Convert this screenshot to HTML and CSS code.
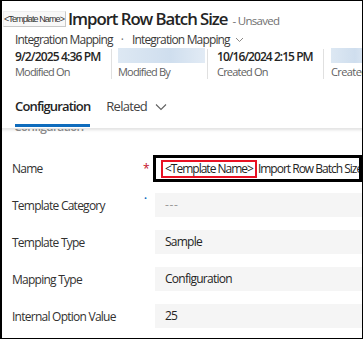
FILE: index.html
```html
<!DOCTYPE html>
<html>
<head>
<meta charset="utf-8">
<link rel="stylesheet" href="styles.css">
</head>
<body>
<div class="frame">
  <header class="head">
    <div class="title-row">
      <span class="tag">&lt;Template Name&gt;</span>
      <h1 class="title">Import Row Batch Size</h1>
      <span class="unsaved">- Unsaved</span>
    </div>
    <div class="crumbs">
      <span>Integration Mapping</span>
      <span class="dot">·</span>
      <span>Integration Mapping</span>
      <svg class="chev-sm" width="9" height="6" viewBox="0 0 9 6"><path d="M1 1l3.5 3.5L8 1" fill="none" stroke="#8a8886" stroke-width="1"/></svg>
    </div>
    <div class="facts">
      <div class="fact f1">
        <div class="val">9/2/2025 4:36 PM</div>
        <div class="lab">Modified On</div>
      </div>
      <div class="fact f2">
        <div class="blur"></div>
        <div class="lab">Modified By</div>
      </div>
      <div class="fact f3">
        <div class="val">10/16/2024 2:15 PM</div>
        <div class="lab">Created On</div>
      </div>
      <div class="fact f4">
        <div class="blur"></div>
        <div class="lab">Created By</div>
      </div>
    </div>
    <nav class="tabs">
      <span class="tab active">Configuration</span>
      <span class="tab">Related
        <svg class="chev" width="12" height="8" viewBox="0 0 12 8"><path d="M1 1.5l5 5 5-5" fill="none" stroke="#616161" stroke-width="1.1"/></svg>
      </span>
    </nav>
  </header>
  <main class="body">
    <div class="section-title">Configuration</div>
    <div class="form">
      <div class="row">
        <div class="label">Name</div>
        <div class="mark req">*</div>
        <div class="input focus"><span class="hl">&lt;Template Name&gt;</span>Import Row Batch Size</div>
      </div>
      <div class="row">
        <div class="label">Template Category</div>
        <div class="mark rec">•</div>
        <div class="input empty">---</div>
      </div>
      <div class="row">
        <div class="label">Template Type</div>
        <div class="mark"></div>
        <div class="input">Sample</div>
      </div>
      <div class="row">
        <div class="label">Mapping Type</div>
        <div class="mark"></div>
        <div class="input">Configuration</div>
      </div>
      <div class="row">
        <div class="label">Internal Option Value</div>
        <div class="mark"></div>
        <div class="input">25</div>
      </div>
    </div>
  </main>
</div>
</body>
</html>
```
FILE: styles.css
```css
* { box-sizing: border-box; }
html, body { margin: 0; padding: 0; background: #fff; }
body { font-family: "Open Sans", "Noto Sans", sans-serif; color: #242424; }

.frame {
  width: 363px;
  height: 339px;
  border: 1px solid #000;
  border-left-width: 2px;
  overflow: hidden;
  background: #fff;
  position: relative;
}

.title-row {
  display: flex;
  align-items: center;
  height: 30px;
  padding-top: 5px;
  padding-left: 1px;
  white-space: nowrap;
}
.tag {
  font-family: "Liberation Sans", sans-serif;
  font-size: 9px;
  letter-spacing: -0.9px;
  color: #333;
  border: 1px solid #c8c8c8;
  border-top-color: #eee;
  border-left-color: #eee;
  padding: 1px 1px 1px 0;
  line-height: 12px;
  background: #f8f8f8;
  margin-right: 2px;
}
.title {
  margin: 0;
  font-size: 16.8px;
  font-weight: 600;
  letter-spacing: -1.05px;
  color: #242424;
  line-height: 24px;
}
.unsaved {
  font-size: 11.5px;
  letter-spacing: -0.7px;
  color: #707070;
  margin-left: 5px;
  margin-top: 3px;
}

.crumbs {
  display: flex;
  align-items: center;
  padding-left: 13px;
  height: 16px;
  font-size: 12px;
  font-weight: 500;
  letter-spacing: -0.85px;
  color: #3b3a39;
  white-space: nowrap;
}
.crumbs .dot { margin: 0 9px 0 8px; color: #707070; font-weight: 400; }
.chev-sm { margin-left: 5px; margin-top: 2px; }

.facts {
  display: flex;
  height: 33px;
  margin-top: 1px;
  padding-left: 13px;
  white-space: nowrap;
}
.fact {
  display: flex;
  flex-direction: column;
  border-right: 1px solid #e0e0e0;
  height: 30px;
  margin-top: 1px;
  flex: none;
}
.f1 { width: 97px; }
.f2 { width: 96px; padding-left: 6px; }
.f3 { width: 116px; padding-left: 9px; }
.f4 { padding-left: 7px; border-right: none; }
.val {
  font-size: 12px;
  font-weight: 600;
  letter-spacing: -0.85px;
  line-height: 16px;
  color: #242424;
}
.f3 .val { letter-spacing: -0.95px; }
.lab {
  font-size: 11px;
  color: #616161;
  letter-spacing: -0.8px;
  line-height: 14px;
}
.f4 .lab { letter-spacing: -0.6px; }
.blur {
  height: 15px;
  margin-top: -1px;
  margin-bottom: 2px;
  width: 87px;
  background: linear-gradient(90deg, #dde8f3, #cfdeee 60%, #e2ebf5);
  filter: blur(0.6px);
}
.f4 .blur { width: 40px; }

.tabs {
  display: flex;
  align-items: flex-start;
  height: 47px;
  padding-left: 13px;
  padding-top: 15px;
  white-space: nowrap;
}
.tab {
  font-size: 13px;
  color: #424242;
  letter-spacing: -0.7px;
  line-height: 20px;
  display: flex;
  align-items: center;
}
.tab.active {
  font-weight: 600;
  color: #242424;
  letter-spacing: -0.85px;
  padding-bottom: 8px;
  border-bottom: 3px solid #0f6cbd;
  margin-right: 16px;
}
.chev { margin-left: 8px; margin-top: 1px; }

.body {
  position: relative;
  height: 212px;
  border-top: 1px solid #e6e6e6;
  box-shadow: inset 0 3px 3px -2px rgba(0,0,0,0.12);
  overflow: hidden;
}
.section-title {
  font-size: 12px;
  font-weight: 600;
  letter-spacing: -0.8px;
  color: #8a8a8a;
  padding-left: 12px;
  margin-top: -10px;
  height: 16px;
  line-height: 16px;
}

.form {
  display: flex;
  flex-direction: column;
  gap: 11px;
  margin-top: 20px;
}
.row {
  display: grid;
  grid-template-columns: 141px 10px 1fr;
  align-items: center;
  height: 26px;
}
.label {
  font-size: 12px;
  color: #323130;
  letter-spacing: -0.75px;
  padding-left: 10px;
  white-space: nowrap;
}
.mark { font-size: 12px; align-self: start; line-height: 14px; }
.mark.req { color: #c50f1f; margin-top: 7px; }
.mark.rec { color: #0f6cbd; font-size: 8px; line-height: 8px; margin-left: 1px; margin-top: 2px; }

.input {
  height: 24px;
  background: #f5f5f5;
  margin-left: 2px;
  font-size: 12px;
  letter-spacing: -0.75px;
  color: #242424;
  padding-left: 10px;
  line-height: 24px;
  white-space: nowrap;
  overflow: hidden;
}
.input.empty { color: #9a9a9a; letter-spacing: 0.6px; }
.input.focus {
  height: 27px;
  margin-left: 0;
  background: #fff;
  border: 3px solid #000;
  padding-left: 5px;
  display: flex;
  align-items: center;
  font-size: 12px;
  letter-spacing: -1px;
}
.hl {
  border: 2px solid #e81123;
  padding: 0 2px 0 2px;
  line-height: 14px;
  margin-right: 1px;
}
```
